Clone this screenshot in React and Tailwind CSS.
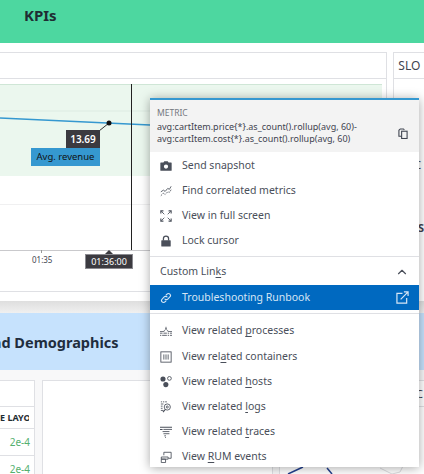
import React from "react";
import { ChevronUp } from "lucide-react";

const iconColor = "#4a4f5a";

const CameraIcon = () => (
  <svg width="12" height="12" viewBox="0 0 14 14">
    <path fill={iconColor} fillRule="evenodd" d="M1 3h3l1-1.500h4L10 3h3a.6.6 0 0 1 .6.6v8.400a.6.6 0 0 1-.6.6H1a.6.6 0 0 1-.6-.6V3.600A.6.6 0 0 1 1 3zm6 2.200a2.500 2.500 0 1 0 0 5 2.500 2.500 0 0 0 0-5z" />
  </svg>
);

const TrendIcon = () => (
  <svg width="12" height="12" viewBox="0 0 14 14" fill="none" stroke={iconColor} strokeWidth="1">
    <path d="M1 8l3-2 2 1.500L9 4l2 1 2-3.500" />
    <path d="M1 12.500l3-3 2 1.500 3-3 2 .5 2-3" strokeDasharray="2 1" />
  </svg>
);

const ExpandIcon = () => (
  <svg width="12" height="12" viewBox="0 0 14 14" fill="none" stroke={iconColor} strokeWidth="1.300">
    <path d="M1 4V1h3M10 1h3v3M13 10v3h-3M4 13H1v-3" />
    <path d="M1.500 1.500L5 5M12.500 1.500L9 5M12.500 12.500L9 9M1.500 12.500L5 9" strokeWidth="1" />
  </svg>
);

const LockIcon = () => (
  <svg width="12" height="12" viewBox="0 0 14 14">
    <path fill="none" stroke={iconColor} strokeWidth="1.500" d="M4 6.500V4.200a3 3 0 0 1 6 0v2.300" />
    <rect x="1.500" y="6" width="11" height="7.500" rx="0.8" fill={iconColor} />
  </svg>
);

const LinkIcon = ({ color }) => (
  <svg width="12" height="12" viewBox="0 0 14 14" fill="none" stroke={color} strokeWidth="1.300" strokeLinecap="round">
    <path d="M5.800 8.200a2.300 2.300 0 0 0 3.300 0l2.400-2.400a2.300 2.300 0 0 0-3.300-3.300L7.200 3.500" />
    <path d="M8.200 5.800a2.300 2.300 0 0 0-3.300 0L2.500 8.200a2.300 2.300 0 0 0 3.300 3.300l1-1" />
  </svg>
);

const ExternalIcon = () => (
  <svg width="13" height="13" viewBox="0 0 14 14" fill="none" stroke="#d6e6f5" strokeWidth="1.300">
    <path d="M7 2.500H1v10.500h10.500V7.500" />
    <path d="M5 9l7.500-7.500M8.500 1h4.500v4.500" />
  </svg>
);

const CopyIcon = () => (
  <svg width="10" height="11" viewBox="0 0 11 12" fill="none" stroke="#3f4450" strokeWidth="1.200">
    <path d="M3.500 9H1V2.500L2.500 1H6l1 1" />
    <rect x="4" y="3.500" width="6" height="8" />
  </svg>
);

const ProcessesIcon = () => (
  <svg width="12" height="12" viewBox="0 0 14 14" fill={iconColor}>
    <path d="M0 7h4l1.500-1L7 1.500 8.500 6l1.500 1h4v.8H9.500L8.400 7 7 4 5.600 7l-1.100.8H0z" />
    <rect x="0" y="9" width="3" height="1" />
    <rect x="4" y="9" width="4" height="1" />
    <rect x="9" y="9" width="1.500" height="1" />
    <rect x="11.500" y="9" width="2.500" height="1" />
    <rect x="0" y="11.500" width="1.500" height="1" />
    <rect x="2.500" y="11.500" width="5.500" height="1" />
    <rect x="9" y="11.500" width="1.500" height="1" />
    <rect x="11.500" y="11.500" width="2.500" height="1" />
  </svg>
);

const ContainersIcon = () => (
  <svg width="12" height="12" viewBox="0 0 14 14" fill="none" stroke={iconColor}>
    <rect x="1" y="1" width="12" height="12" />
    <path d="M4.500 4v6M7 4v6M9.500 4v6" />
  </svg>
);

const HostsIcon = () => (
  <svg width="12" height="12" viewBox="0 0 14 14">
    <circle cx="3.500" cy="3.500" r="3" fill={iconColor} />
    <circle cx="11" cy="2.800" r="2.200" fill="none" stroke={iconColor} />
    <circle cx="6.800" cy="10" r="3" fill={iconColor} />
  </svg>
);

const LogsIcon = () => (
  <svg width="12" height="12" viewBox="0 0 14 14" fill="none" stroke={iconColor}>
    <path d="M1 1h1.500M3.500 1H5M6 1h2M1 3.500h3M1 6h2M1 8.500h2M1 11h3" />
    <circle cx="8.500" cy="7" r="3.600" />
    <circle cx="8.500" cy="7" r="1.200" />
    <path d="M6 10l-2.500 3" strokeWidth="1.300" />
  </svg>
);

const TracesIcon = () => (
  <svg width="12" height="12" viewBox="0 0 14 14" fill="none" stroke={iconColor}>
    <path d="M0 1.500h14M0 4h3" strokeWidth="1.200" />
    <path d="M4 4h10M3 6.500h8M4 9h7M5 11.500h2M6 13.500h1" strokeWidth="1" />
  </svg>
);

const RumIcon = () => (
  <svg width="12" height="12" viewBox="0 0 14 14" fill="none" stroke={iconColor}>
    <path d="M4.500 5V1.500h8.500v7h-3" />
    <path d="M1.500 7h8v2.500h-8zM1.500 9.500H6.500v4h-5z" />
  </svg>
);

const MenuRow = ({ icon, children }) => (
  <div className="flex h-[25.200px] items-center pl-[10px] text-[#4a4f5a]">
    <span className="flex w-[22px] shrink-0">{icon}</span>
    <span>{children}</span>
  </div>
);

const Key = ({ children }) => <span className="underline underline-offset-2">{children}</span>;

const ContextMenu = () => (
  <div className="absolute left-[150px] top-[98px] w-[269px] border-t-[2px] border-[#3598d0] bg-white text-[10.500px] shadow-[0_1px_10px_rgba(0,0,0,0.35)]">
    <div className="h-[52px] bg-[#f3f3f3] pl-[7px] pr-[11px] pt-[6px]">
      <div className="text-[8.500px] leading-[14px] text-[#74777f]">METRIC</div>
      <div className="mt-[1px] flex items-center justify-between">
        <div className="text-[9px] leading-[12px] text-[#3f4450]">
          avg:cartItem.price{"{*}"}.as_count().rollup(avg, 60)-
          <br />
          avg:cartItem.cost{"{*}"}.as_count().rollup(avg, 60)
        </div>
        <CopyIcon />
      </div>
    </div>
    <div className="border-b-[1px] border-[#dfe0e4] pb-[2px] pt-[1px]">
      <MenuRow icon={<CameraIcon />}>Send snapshot</MenuRow>
      <MenuRow icon={<TrendIcon />}>Find correlated metrics</MenuRow>
      <MenuRow icon={<ExpandIcon />}>View in full screen</MenuRow>
      <MenuRow icon={<LockIcon />}>Lock cursor</MenuRow>
    </div>
    <div className="flex h-[28px] items-center justify-between pl-[10px] pr-[10px] pt-[2px] text-[#4a4f5a]">
      <span>
        Custom Lin<Key>k</Key>s
      </span>
      <ChevronUp size={14} color={iconColor} />
    </div>
    <div className="flex h-[25px] items-center justify-between bg-[#0069c0] pl-[10px] pr-[10px] pt-[1px] text-[#d6e6f5]">
      <span className="flex items-center">
        <span className="flex w-[22px]">
          <LinkIcon color="#d6e6f5" />
        </span>
        Troubleshooting Runbook
      </span>
      <ExternalIcon />
    </div>
    <div className="mt-[3px] h-[154px] border-t-[1px] border-[#dfe0e4] pt-[5px]">
      <MenuRow icon={<ProcessesIcon />}>
        View related <Key>p</Key>rocesses
      </MenuRow>
      <MenuRow icon={<ContainersIcon />}>
        View rel<Key>a</Key>ted containers
      </MenuRow>
      <MenuRow icon={<HostsIcon />}>
        View related <Key>h</Key>osts
      </MenuRow>
      <MenuRow icon={<LogsIcon />}>
        View related <Key>l</Key>ogs
      </MenuRow>
      <MenuRow icon={<TracesIcon />}>
        View related <Key>t</Key>races
      </MenuRow>
      <MenuRow icon={<RumIcon />}>
        View <Key>R</Key>UM events
      </MenuRow>
    </div>
  </div>
);

const Chart = () => (
  <div className="relative h-[213px] pr-[4px] pt-[5px] text-[#3f4450]">
    <div className="h-[92px] border-t-[1px] border-[#cfe6d6] bg-[#ebf7ee]" />
    <div className="absolute left-0 top-[31px] h-[2px] w-full bg-[#e4f1e8]" />
    <div className="absolute left-0 top-[125px] h-[1px] w-full bg-[#f0f0f1]" />
    <svg className="absolute left-0 top-0" width="150" height="110">
      <line x1="0" y1="39" x2="150" y2="46" stroke="#3598d0" strokeWidth="1.500" />
      <line x1="99" y1="52" x2="109" y2="44" stroke="#333" strokeWidth="1" />
      <circle cx="109" cy="44" r="2.500" fill="#111" />
    </svg>
    <div className="absolute left-[131px] top-[5px] h-[166px] w-[1px] bg-[#222]" />
    <div className="absolute left-[66px] top-[51px] flex h-[18px] w-[34px] items-center justify-center bg-[#3b3a40] text-[10px] font-semibold text-white">
      13.69
    </div>
    <div className="absolute left-[31px] top-[69px] flex h-[18px] w-[69px] items-center justify-center bg-[#3598d0] text-[9.500px] text-[#111]">
      Avg. revenue
    </div>
    <div className="absolute left-0 top-[171px] h-[1px] w-full bg-[#c9c9cc]" />
    <div className="absolute left-[41px] top-[171px] h-[3px] w-[1px] bg-[#999]" />
    <div className="absolute left-[32px] top-[175px] text-[8px] leading-[12px]">01:35</div>
    <div className="absolute left-[85px] top-[175px] flex h-[15px] w-[48px] items-center justify-center border border-[#8a8a90] bg-[#3b3a40] text-[9px] text-white">
      01:36:00
    </div>
    <div className="absolute left-[105px] top-[171px] h-0 w-0 border-x-[4px] border-b-[4px] border-x-transparent border-b-[#3b3a40]" />
  </div>
);

export default function App() {
  return (
    <div className="relative h-[474px] w-[424px] overflow-hidden bg-white font-['Noto_Sans',sans-serif]">
      <div className="h-[43px] bg-[#4dd7a0] pl-6 pt-[4px] text-[15px] font-bold leading-[22px] text-[#1f2d33]">KPIs</div>

      {/* KPI widgets */}
      <div className="h-[258px] bg-white pt-[9px]">
        <div className="flex gap-[6px]">
          <div className="h-[240px] w-[392px] border-y border-r border-[#dfe0e4]">
            <div className="h-[26px] border-b border-[#dfe0e4]" />
            <Chart />
          </div>
          <div className="h-[240px] flex-1 border-l border-t border-[#dfe0e4]">
            <div className="h-[26px] border-b border-[#dfe0e4] pl-[4px] text-[12px] leading-[25px] text-[#3f4450]">SLO</div>
            <div className="pl-[20px] pt-[78px] text-[11px] leading-[15px] text-[#3f4450]">
              <div>C</div>
              <div>1</div>
              <div className="mt-[33px] font-bold">[S</div>
            </div>
          </div>
        </div>
      </div>
      <div className="h-[12px] bg-linear-to-b from-[#dedede] to-[#f0f0f0]" />

      <div className="flex h-[57px] items-center overflow-hidden bg-[#c6e2fd] pt-[3px] text-[14.500px] font-bold text-[#1f2d3d]">
        <span className="-ml-[8px] whitespace-nowrap">nd Demographics</span>
      </div>

      {/* Lower widgets */}
      <div className="flex bg-[#f8f8f9] pt-[10px]">
        <div className="h-[100px] w-[35px] shrink-0 overflow-hidden border-r border-t border-[#dfe0e4] bg-white">
          <div className="h-[26px] border-b border-[#dfe0e4]" />
          <div className="h-[22px] overflow-hidden whitespace-nowrap border-b border-[#dfe0e4] text-[9px] font-bold leading-[22px] text-[#1f2d33]">
            <div className="w-[29px] overflow-hidden">E LAYOUT</div>
          </div>
          <div className="h-[27px] border-b border-[#dfe0e4] pr-[4px] text-right text-[10px] leading-[27px] text-[#54b06f]">2e-4</div>
          <div className="h-[27px] pr-[4px] text-right text-[10px] leading-[27px] text-[#54b06f]">2e-4</div>
        </div>
        <div className="ml-[7px] h-[100px] w-[231px] shrink-0 border-x border-t border-[#dfe0e4] bg-white" />
        <div className="ml-[6px] h-[100px] flex-1 border-l border-t border-[#dfe0e4] bg-white">
          <div className="h-[26px] border-b border-[#dfe0e4] pr-[1px] text-right text-[11px] leading-[25px] text-[#3f4450]">IC</div>
        </div>
      </div>

      {/* map outline peeking out under the menu */}
      <svg className="absolute left-[270px] top-[460px]" width="154" height="14" fill="none">
        <path d="M18 14L33 7" stroke="#23408e" strokeWidth="1.500" />
        <path d="M57 8L62 14" stroke="#23408e" strokeWidth="1.500" />
        <path d="M110 8L122 14L130 12L134 4" stroke="#dcdcdf" strokeWidth="1" />
      </svg>

      <ContextMenu />
    </div>
  );
}
